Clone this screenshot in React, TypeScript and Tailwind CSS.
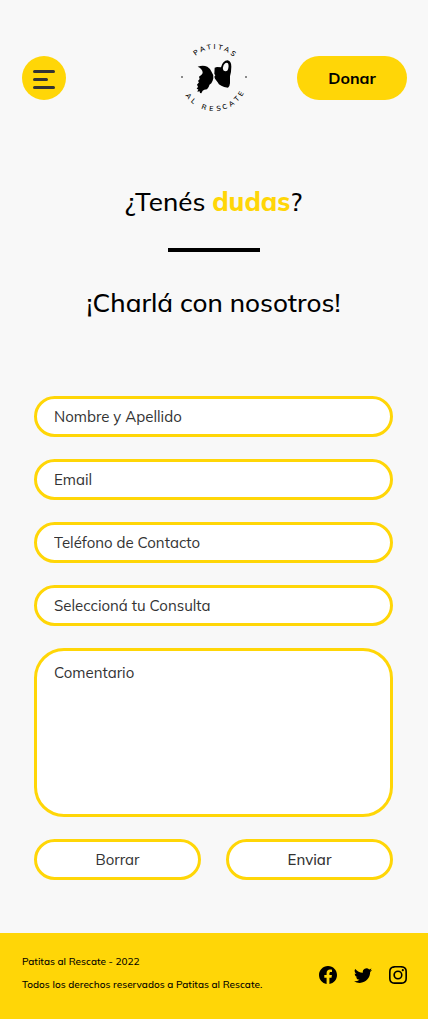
import React from 'react';
import { BsFacebook, BsInstagram, BsTwitter } from 'react-icons/bs';

type Glyph = [angle: number, width: number];

const TOP: Glyph[] = [[-37, 4], [-23, 5], [-10, 4], [1, 2], [12, 4], [25, 5], [39, 4]];
const BOTTOM: Glyph[] = [[53, 5], [40, 4], [19, 4], [5, 4], [-8, 4], [-20, 5], [-33, 5], [-46, 4], [-58, 4]];

function RingText({ text, glyphs, radius, below }: { text: string; glyphs: Glyph[]; radius: number; below?: boolean }) {
  const placed = glyphs.map(([angle, width]) => {
    const t = (angle * Math.PI) / 180;
    const half = width / 2;
    const cx = below ? 35 - radius * Math.sin(t) : 35 + radius * Math.sin(t);
    const cy = below ? 35 + radius * Math.cos(t) : 35 - radius * Math.cos(t);
    return { x: cx - half * Math.cos(t), y: cy - half * Math.sin(t), angle };
  });
  return (
    <text
      fontSize="7"
      fontWeight="600"
      x={placed.map((p) => p.x.toFixed(2)).join(' ')}
      y={placed.map((p) => p.y.toFixed(2)).join(' ')}
      rotate={placed.map((p) => p.angle).join(' ')}
    >
      {text}
    </text>
  );
}

function Logo() {
  return (
    <svg viewBox="0 1 71 70" className="h-[70px] w-[71px]" role="img" aria-label="Patitas al Rescate">
      <RingText text="PATITAS" glyphs={TOP} radius={28} />
      <RingText text="ALRESCATE" glyphs={BOTTOM} radius={34} below />
      <circle cx="3" cy="35" r="0.8" />
      <circle cx="67" cy="35" r="0.8" />
      <g transform="translate(-9 -7) scale(0.3333)">
        <path d="M83 95Q99 90 112 95Q122 101 125 111Q132 120 130 130Q128 140 124 145Q117 149 116 156L111 163L103 164L98 167L94 175L90 174L89 169L82 170L85 163L80 162L84 155L81 149L87 142L84 138L89 132L87 125Q98 119 98 112Q97 101 83 95Z" />
        <path
          fillRule="evenodd"
          d="M134 98L141 96L153 97Q158 77 173 76Q184 78 184 95Q184 110 180 124L180 145Q179 156 174 158Q161 156 154 152Q145 149 143 142L135 131L133 125L136 121L133 117ZM160 106Q167 112 173 106Q178 93 174 85Q168 80 161 90Q157 98 160 106Z"
        />
      </g>
    </svg>
  );
}

const field =
  'w-full h-[41px] rounded-full border-3 border-[#ffd607] bg-white px-[17px] text-[15px] text-[#333333] placeholder:text-[#333333] placeholder:opacity-100 outline-none focus:border-black';

export default function App() {
  return (
    <div className="flex min-h-screen flex-col bg-[#f8f8f8] font-['Mulish','Lato',sans-serif] text-black">
      <header className="grid grid-cols-[1fr_auto_1fr] items-center pt-[43px] pr-[21px] pl-[22px]">
        <button type="button" aria-label="Abrir menú" className="flex size-11 flex-col justify-center gap-[5px] rounded-full bg-[#ffd607] pt-[3px] pl-[11px]">
          <span className="h-[3px] w-[22px] rounded-full bg-[#333333]" />
          <span className="h-[3px] w-[15px] rounded-full bg-[#333333]" />
          <span className="h-[3px] w-[22px] rounded-full bg-[#333333]" />
        </button>
        <a href="#inicio"><Logo /></a>
        <button type="button" className="h-11 w-[110px] justify-self-end rounded-full bg-[#ffd607] text-base font-bold">Donar</button>
      </header>

      <main className="flex grow flex-col pt-[69px] pr-[35px] pb-[53px] pl-[34px]">
        <div className="flex flex-col items-center text-center text-[26px] leading-10 font-medium">
          <h1>¿Tenés <span className="font-extrabold text-[#ffd607]">dudas</span>?</h1>
          <div className="mt-[26px] mb-[31px] h-1 w-[92px] bg-black" />
          <h2>¡Charlá con nosotros!</h2>
        </div>

        <form className="mt-[73px] flex flex-col gap-[22px]" onSubmit={(e) => e.preventDefault()}>
          <input type="text" aria-label="Nombre y Apellido" placeholder="Nombre y Apellido" className={field} />
          <input type="email" aria-label="Email" placeholder="Email" className={field} />
          <input type="tel" aria-label="Teléfono de Contacto" placeholder="Teléfono de Contacto" className={field} />
          <select aria-label="Seleccioná tu Consulta" defaultValue="" className={`${field} appearance-none pt-0.5`}>
            <option value="">Seleccioná tu Consulta</option>
          </select>
          <textarea
            aria-label="Comentario"
            placeholder="Comentario"
            className="block h-[169px] w-full resize-none rounded-[30px] border-3 border-[#ffd607] bg-white px-[17px] py-[11px] text-[15px] text-[#333333] outline-none placeholder:text-[#333333] placeholder:opacity-100 focus:border-black"
          />
          <div className="grid grid-cols-2 gap-[25px]">
            <button type="reset" className={`${field} pt-0.5`}>Borrar</button>
            <button type="submit" className={`${field} pt-0.5 font-medium`}>Enviar</button>
          </div>
        </form>
      </main>

      <footer className="flex items-center justify-between bg-[#ffd607] pt-[21px] pr-[21px] pb-[26px] pl-[22px]">
        <div className="flex flex-col gap-[7px] text-[10px] leading-4 font-medium">
          <p>Patitas al Rescate - 2022</p>
          <p>Todos los derechos reservados a Patitas al Rescate.</p>
        </div>
        <div className="flex gap-[17px] pt-[3px]">
          <a href="#facebook" aria-label="Facebook"><BsFacebook className="size-[18px]" /></a>
          <a href="#twitter" aria-label="Twitter"><BsTwitter className="size-[18px]" /></a>
          <a href="#instagram" aria-label="Instagram"><BsInstagram className="size-[18px]" /></a>
        </div>
      </footer>
    </div>
  );
}
